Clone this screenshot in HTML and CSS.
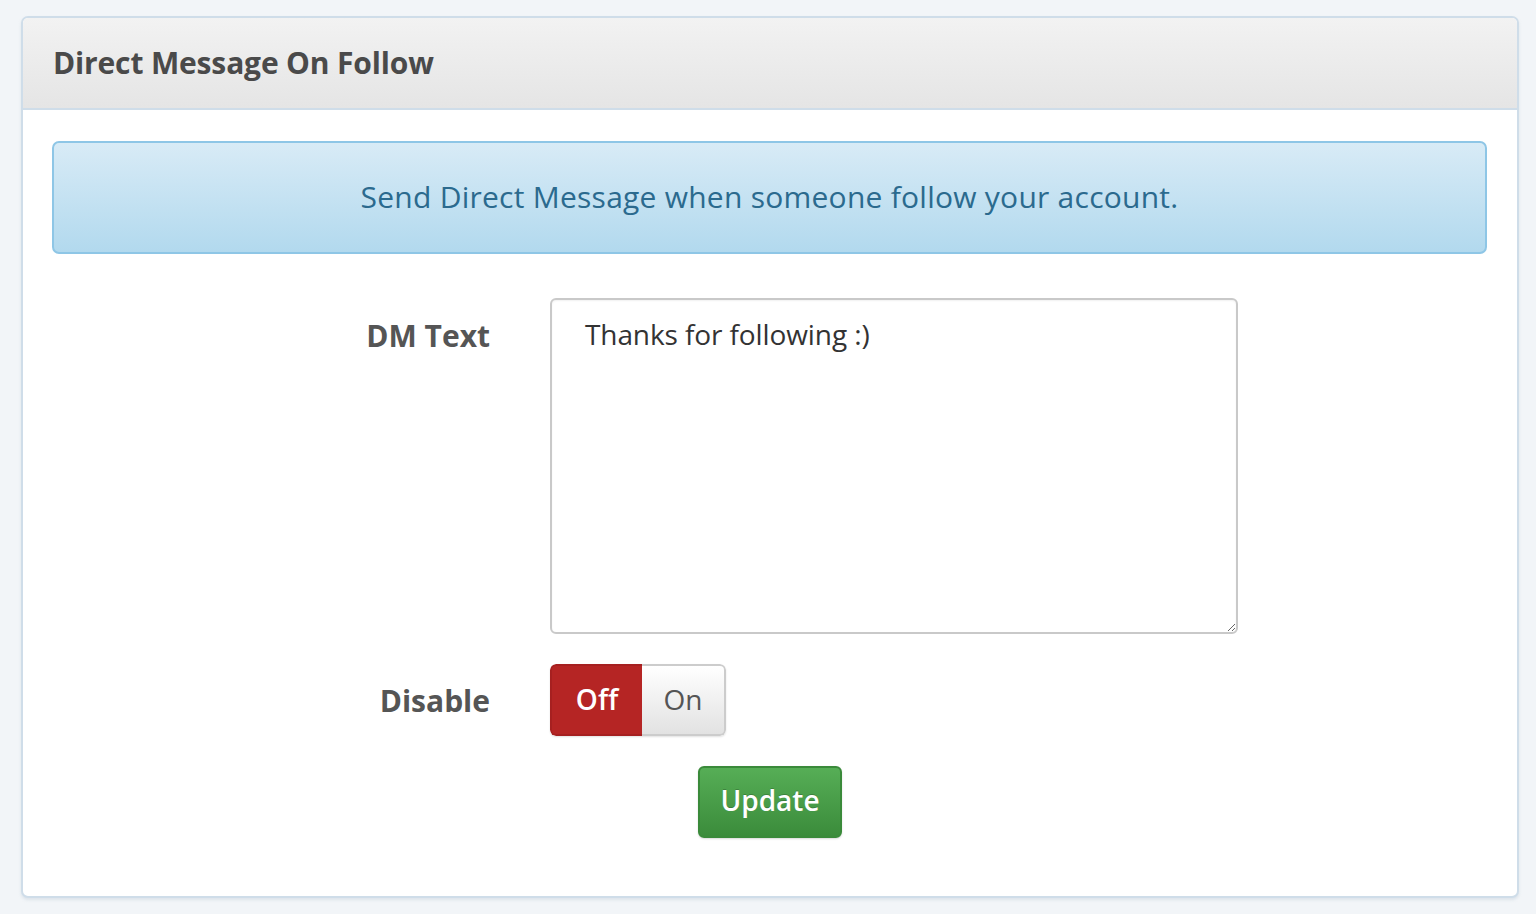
FILE: index.html
```html
<!DOCTYPE html>
<html>
<head>
<meta charset="utf-8">
<link rel="stylesheet" href="styles.css">
</head>
<body>
<div class="panel">
  <div class="panel-head">Direct Message On Follow</div>
  <div class="panel-body">
    <div class="alert">Send Direct Message when someone follow your account.</div>
    <form class="form">
      <div class="row">
        <label class="label label-top">DM Text</label>
        <div class="field">
          <textarea class="textarea">Thanks for following :)</textarea>
        </div>
      </div>
      <div class="row row-mid">
        <label class="label">Disable</label>
        <div class="field">
          <div class="toggle">
            <span class="tg tg-off">Off</span>
            <span class="tg tg-on">On</span>
          </div>
        </div>
      </div>
      <div class="actions">
        <button type="button" class="btn">Update</button>
      </div>
    </form>
  </div>
</div>
</body>
</html>
```

FILE: styles.css
```css
html, body {
  margin: 0;
  padding: 0;
  background: #f2f5f8;
}
body {
  font-family: "Open Sans", "Noto Sans", sans-serif;
  padding: 16px 17px 0 21px;
  height: 914px;
  box-sizing: border-box;
}
.panel {
  border: 2px solid #cfdde9;
  border-radius: 7px;
  background: #fff;
  height: 882px;
  box-sizing: border-box;
  overflow: hidden;
  box-shadow: 0 2px 3px rgba(180, 195, 210, 0.35);
}
.panel-head {
  height: 92px;
  box-sizing: border-box;
  border-bottom: 2px solid #cfdde9;
  background: linear-gradient(#f2f2f2, #e5e5e5);
  color: #4a4a4a;
  font-weight: 700;
  font-size: 30px;
  padding: 0 0 2px 30px;
  display: flex;
  align-items: center;
  letter-spacing: -0.15px;
}
.panel-body {
  padding: 31px 30px 0 29px;
}
.alert {
  height: 113px;
  box-sizing: border-box;
  border: 2px solid #8ec6e6;
  border-radius: 7px;
  background: linear-gradient(#d8ebf6, #b2d9ee);
  color: #2b6a8e;
  font-size: 30px;
  display: flex;
  align-items: center;
  justify-content: center;
  padding-bottom: 2px;
  letter-spacing: 0.25px;
}
.form {
  margin-top: 44px;
}
.row {
  display: flex;
  align-items: flex-start;
  gap: 60px;
}
.row-mid {
  margin-top: 30px;
  align-items: center;
}
.label {
  width: 438px;
  text-align: right;
  color: #555;
  font-weight: 700;
  font-size: 30px;
}
.label-top {
  padding-top: 17px;
}
.textarea {
  display: block;
  width: 688px;
  height: 336px;
  box-sizing: border-box;
  border: 2px solid #c9c9c9;
  border-radius: 6px;
  padding: 15px 33px;
  font-family: "Open Sans", "Noto Sans", sans-serif;
  font-size: 28px;
  letter-spacing: -0.1px;
  color: #333;
  resize: vertical;
  outline: none;
  box-shadow: inset 0 1px 2px rgba(0,0,0,0.06);
}
.toggle {
  display: flex;
  height: 72px;
  width: 176px;
  border-radius: 6px;
  overflow: hidden;
  box-shadow: 0 1px 2px rgba(0,0,0,0.12);
}
.tg {
  display: flex;
  align-items: center;
  justify-content: center;
  font-size: 28px;
  padding-bottom: 2px;
}
.tg-off {
  width: 92px;
  background: #b52524;
  color: #fff;
  font-weight: 600;
  border: 2px solid #a62020;
  border-right: none;
  border-radius: 6px 0 0 6px;
  box-sizing: border-box;
}
.tg-on {
  flex: 1;
  background: linear-gradient(#ffffff, #e2e2e2);
  color: #555;
  border: 2px solid #cccccc;
  border-left: none;
  border-radius: 0 6px 6px 0;
  box-sizing: border-box;
}
.actions {
  margin-top: 30px;
  padding-left: 646px;
}
.btn {
  width: 144px;
  height: 72px;
  border: 2px solid #3a8a3a;
  border-radius: 6px;
  background: linear-gradient(#56ae56, #3b8c3b);
  color: #fff;
  font-family: "Open Sans", "Noto Sans", sans-serif;
  font-weight: 600;
  font-size: 28px;
  padding: 0 0 4px;
  box-shadow: 0 1px 2px rgba(0,0,0,0.15);
  text-shadow: 0 -1px 0 rgba(0,0,0,0.2);
}
```
